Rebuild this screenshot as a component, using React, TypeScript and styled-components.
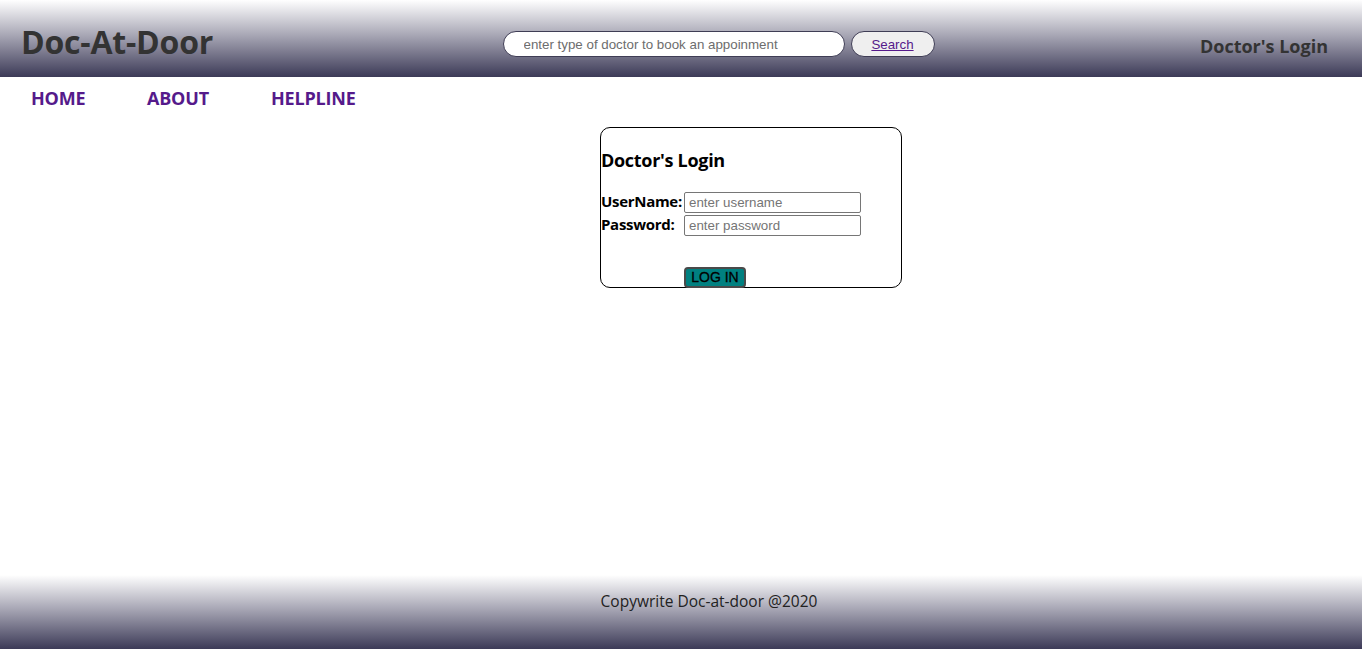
import React from "react";
import styled, { createGlobalStyle } from "styled-components";

const Global = createGlobalStyle`
  html, body { margin: 0; padding: 0; background: #fff; }
  body { font-family: "Open Sans", "Noto Sans", sans-serif; }
  * { box-sizing: border-box; }
`;

const Page = styled.div`
  display: flex;
  flex-direction: column;
  min-height: 649px;
`;

const Header = styled.header`
  height: 77px;
  display: grid;
  grid-template-columns: 1fr auto 1fr;
  align-items: center;
  padding: 0 34px 0 21px;
  background: linear-gradient(to bottom, #ffffff 0%, #a9a8b6 45%, #3c3a57 100%);
`;

const Brand = styled.h1`
  margin: 0;
  font-size: 32px;
  font-weight: 700;
  color: #333;
  letter-spacing: -0.2px;
  padding-top: 5px;
`;

const SearchForm = styled.form`
  display: flex;
  align-items: center;
  gap: 6px;
  margin: 0 0 0 88px;
  padding-top: 11px;
`;

const SearchInput = styled.input`
  width: 342px;
  height: 26px;
  border: 1px solid #3f3d55;
  border-radius: 13px;
  padding: 0 20px;
  font-family: "Liberation Sans", Arial, sans-serif;
  font-size: 13.33px;
  background: #fff;
  outline: none;
  &::placeholder { color: #6d6d6d; }
`;

const SearchButton = styled.button`
  width: 84px;
  height: 26px;
  border: 1px solid #3f3d55;
  border-radius: 13px;
  background: #efefef;
  font-family: "Liberation Sans", Arial, sans-serif;
  font-size: 13.33px;
  color: #551a8b;
  text-decoration: underline;
  cursor: pointer;
`;

const HeaderLink = styled.a`
  justify-self: end;
  font-size: 18px;
  font-weight: 700;
  color: #333;
  text-decoration: none;
  padding-top: 15px;
`;

const Nav = styled.nav`
  display: flex;
  align-items: center;
  height: 42px;
  padding-left: 31px;
  padding-top: 0;
`;

const NavLink = styled.a<{ $w: number }>`
  width: ${(p) => p.$w}px;
  font-size: 18px;
  font-weight: 700;
  color: #551a8b;
  text-decoration: none;
  letter-spacing: -0.2px;
`;

const Main = styled.main`
  flex: 1;
  display: flex;
  justify-content: center;
  align-items: flex-start;
  padding-top: 8px;
  padding-left: 140px;
`;

const LoginBox = styled.form`
  width: 302px;
  height: 161px;
  border: 1px solid #000;
  border-radius: 10px;
  padding: 20px 0 0 0;
  margin: 0;
`;

const Title = styled.h3`
  margin: 0 0 19px 0;
  font-size: 18px;
  font-weight: 700;
  color: #000;
  letter-spacing: -0.3px;
`;

const Row = styled.div`
  display: flex;
  align-items: center;
  height: 23px;
`;

const Label = styled.label`
  width: 83px;
  font-size: 15px;
  font-weight: 700;
  color: #000;
  letter-spacing: -0.3px;
  padding-bottom: 3px;
`;

const Field = styled.input`
  width: 177px;
  height: 21px;
  border: 1px solid #767676;
  border-radius: 2px;
  padding: 0 4px;
  font-family: "Liberation Sans", Arial, sans-serif;
  font-size: 13.33px;
  outline: none;
  &::placeholder { color: #757575; }
`;

const ButtonRow = styled.div`
  padding-left: 83px;
  margin-top: 28px;
`;

const LoginButton = styled.button`
  width: 62px;
  height: 21px;
  border: 2px solid #4a4a4a;
  border-radius: 4px;
  background: #008080;
  color: #000;
  font-family: "Liberation Sans", Arial, sans-serif;
  font-size: 14px;
  padding: 0;
  line-height: 17px;
  -webkit-text-stroke: 0.3px #000;
`;

const Footer = styled.footer`
  height: 74px;
  display: flex;
  justify-content: center;
  padding-top: 15px;
  padding-left: 56px;
  background: linear-gradient(to bottom, #ffffff 0%, #a9a8b6 45%, #3c3a57 100%);
  font-size: 15.5px;
  color: #222;
`;

export default function App() {
  return (
    <Page>
      <Global />
      <Header>
        <Brand>Doc-At-Door</Brand>
        <SearchForm onSubmit={(e) => e.preventDefault()}>
          <SearchInput placeholder="enter type of doctor to book an appoinment" />
          <SearchButton type="submit">Search</SearchButton>
        </SearchForm>
        <HeaderLink href="#">Doctor's Login</HeaderLink>
      </Header>
      <Nav>
        <NavLink $w={116} href="#">HOME</NavLink>
        <NavLink $w={124} href="#">ABOUT</NavLink>
        <NavLink $w={120} href="#">HELPLINE</NavLink>
      </Nav>
      <Main>
        <LoginBox onSubmit={(e) => e.preventDefault()}>
          <Title>Doctor's Login</Title>
          <Row>
            <Label>UserName:</Label>
            <Field placeholder="enter username" />
          </Row>
          <Row>
            <Label>Password:</Label>
            <Field type="password" placeholder="enter password" />
          </Row>
          <ButtonRow>
            <LoginButton type="submit">LOG IN</LoginButton>
          </ButtonRow>
        </LoginBox>
      </Main>
      <Footer>Copywrite Doc-at-door @2020</Footer>
    </Page>
  );
}
